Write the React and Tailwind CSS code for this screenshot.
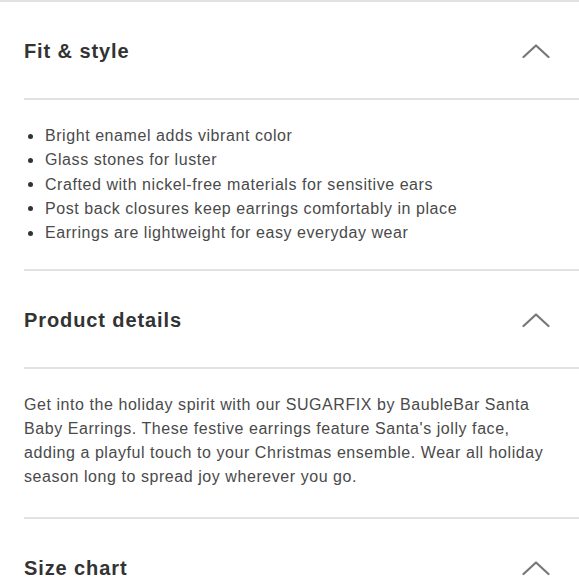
import React from "react";

function Chevron() {
  return (
    <svg width="28" height="16" viewBox="0 0 28 16" fill="none" className="shrink-0">
      <path d="M1.5 14 L14 2.5 L26.5 14" stroke="#777777" strokeWidth="2.2" strokeLinecap="round" strokeLinejoin="round" />
    </svg>
  );
}

function Header({ title }) {
  return (
    <div className="flex h-[96px] items-center justify-between pt-[2px] pr-[29px]">
      <h2 className="text-[20px] font-bold tracking-[0.9px] text-[#333333]">{title}</h2>
      <Chevron />
    </div>
  );
}

const bullets = [
  "Bright enamel adds vibrant color",
  "Glass stones for luster",
  "Crafted with nickel-free materials for sensitive ears",
  "Post back closures keep earrings comfortably in place",
  "Earrings are lightweight for easy everyday wear",
];

export default function App() {
  return (
    <div
      className="min-h-[580px] w-[579px] overflow-hidden bg-white"
      style={{ fontFamily: '"Liberation Sans", Arial, sans-serif' }}
    >
      <div className="h-[2px] bg-[#e2e2e2]" />
      <div className="pl-6">
        <Header title="Fit & style" />
        <div className="h-[2px] bg-[#e2e2e2]" />
        <ul className="pt-[24px] pb-[24px] text-[16px] leading-[24.25px] tracking-[0.56px] text-[#4a4a4a]">
          {bullets.map((b) => (
            <li key={b} className="flex items-center">
              <span className="ml-[4px] mr-[12px] h-[5px] w-[5px] rounded-full bg-[#333333]" />
              <span>{b}</span>
            </li>
          ))}
        </ul>
        <div className="h-[2px] bg-[#e2e2e2]" />
        <Header title="Product details" />
        <div className="h-[2px] bg-[#e2e2e2]" />
        <p className="pt-[24px] pb-[28px] pr-6 text-[16px] leading-[24px] tracking-[0.56px] text-[#4a4a4a]">
          Get into the holiday spirit with our SUGARFIX by BaubleBar Santa Baby Earrings. These festive earrings feature Santa's jolly face, adding a playful touch to your Christmas ensemble. Wear all holiday season long to spread joy wherever you go.
        </p>
        <div className="h-[2px] bg-[#e2e2e2]" />
        <Header title="Size chart" />
      </div>
    </div>
  );
}
